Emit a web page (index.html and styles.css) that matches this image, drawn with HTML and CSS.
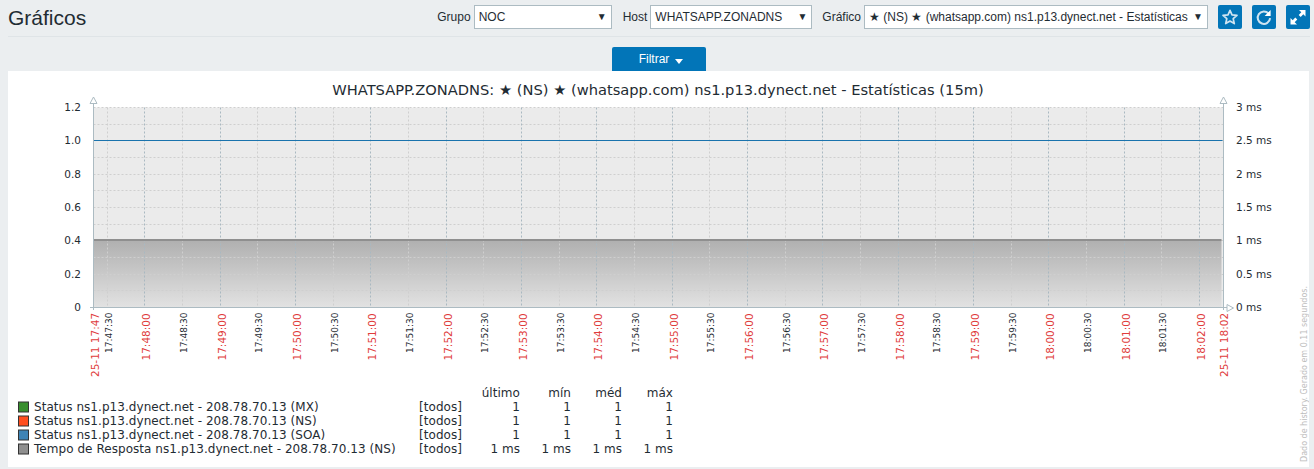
FILE: index.html
```html
<!DOCTYPE html>
<html>
<head>
  <title>Gráficos</title>
  <link rel="stylesheet" href="styles.css">
</head>
<body>
  <header class="page-head">
    <h1>Gráficos</h1>
    <div class="controls">
      <label class="field">Grupo
        <span class="select select-group"><select><option>NOC</option></select></span>
      </label>
      <label class="field">Host
        <span class="select select-host"><select><option>WHATSAPP.ZONADNS</option></select></span>
      </label>
      <label class="field">Gráfico
        <span class="select select-graph"><select><option>★ (NS) ★ (whatsapp.com) ns1.p13.dynect.net - Estatísticas</option></select></span>
      </label>
      <div class="icon-buttons">
        <button class="icon-btn" title="Favorito">
          <svg viewBox="0 0 24 24" width="24" height="24"><path d="M12 5.300l2 4.600 5 .5-3.800 3.300 1.100 4.900-4.300-2.600-4.300 2.600 1.100-4.900-3.800-3.300 5-.5z" fill="none" stroke="#cfe4f1" stroke-width="1.700" stroke-linejoin="round"/></svg>
        </button>
        <button class="icon-btn" title="Atualizar">
          <svg viewBox="0 0 24 24" width="24" height="24"><path d="M16.600 8.600a6.200 6.200 0 1 0 1.500 4.600" fill="none" stroke="#cfe4f1" stroke-width="2"/><path d="M18.600 5v6h-6z" fill="#fff"/></svg>
        </button>
        <button class="icon-btn" title="Tela cheia">
          <svg viewBox="0 0 24 24" width="24" height="24"><path d="M13 5h6.500v6.500l-2.200-2.200-2.600 2.600-2-2 2.600-2.600zM11 19.500H4.500V13l2.200 2.200 2.600-2.600 2 2-2.600 2.600z" fill="#fff"/></svg>
        </button>
      </div>
    </div>
  </header>

  <div class="filter-row">
    <button class="filter-tab">Filtrar<span class="caret"></span></button>
  </div>

  <main class="graph-card">
    <svg id="graph" viewBox="8 71 1301 396" width="1301" height="396"></svg>
  </main>

  <script>
    const NS = "http://www.w3.org/2000/svg";
    const graph = document.getElementById("graph");

    function add(tag, attrs, text) {
      const el = document.createElementNS(NS, tag);
      for (const key in attrs) el.setAttribute(key, attrs[key]);
      if (text) el.textContent = text;
      graph.appendChild(el);
      return el;
    }

    function vtext(x, y, cls, text) {
      add("text", { class: cls, transform: `translate(${x} ${y}) rotate(-90)` }, text);
    }

    const plotLeft = 93.5, plotRight = 1223.5, plotTop = 107.5, plotBottom = 307.5;
    const defs = add("defs", {});
    defs.innerHTML = `<linearGradient id="fade" x1="0" y1="0" x2="0" y2="1">
      <stop offset="0" stop-color="#b0b0b0"/><stop offset="1" stop-color="#e2e2e2"/></linearGradient>`;

    add("rect", { x: plotLeft, y: plotTop, width: plotRight - plotLeft, height: plotBottom - plotTop, fill: "#ebebeb" });
    add("rect", { x: plotLeft, y: 240, width: plotRight - plotLeft - 2, height: plotBottom - 240, fill: "url(#fade)" });

    // horizontal grid, every 0.1
    for (let i = 0; i < 12; i++) {
      const y = Math.round(plotTop + i * 200 / 12 - 0.5) + 0.5;
      add("line", { class: "grid", x1: plotLeft, x2: plotRight, y1: y, y2: y });
    }

    // vertical grid and time labels
    for (let i = 0; i < 30; i++) {
      const x = Math.round(106.7 + i * 37.665) + 0.5;
      const minute = i % 2 == 1;
      add("line", { class: minute ? "grid-major" : "grid", x1: x, x2: x, y1: plotTop, y2: plotBottom });
      const total = 17 * 3600 + 47 * 60 + 30 + i * 30;
      const h = Math.floor(total / 3600), m = Math.floor(total / 60) % 60, s = total % 60;
      const label = `${h}:${String(m).padStart(2, "0")}:${String(s).padStart(2, "0")}`;
      if (minute) vtext(x + 5, 360.5, "tick-red", label);
      else vtext(x + 4.5, 353, "tick", label);
    }
    vtext(99, 377, "tick-red", "25-11 17:47");
    vtext(1228, 377, "tick-red", "25-11 18:02");

    // series
    add("line", { x1: plotLeft, x2: plotRight - 1, y1: 140.5, y2: 140.5, stroke: "#1a73ad", "stroke-width": 1 });
    add("line", { x1: plotLeft, x2: plotRight - 2, y1: 240, y2: 240, stroke: "#8f8f8f", "stroke-width": 2 });

    // axes with arrows
    add("path", { class: "axis", d: `M${plotLeft} 101V310M${plotRight} 101V310M90 ${plotBottom}H1230` });
    add("path", { class: "arrow", d: "M93.5 97l-3.500 6.500h7z" });
    add("path", { class: "arrow", d: "M1223.500 97l-3.500 6.500h7z" });
    add("path", { class: "arrow", d: "M1233.500 308l-6.500-3.500v7z" });

    const leftVals = ["1.2", "1.0", "0.8", "0.6", "0.4", "0.2", "0"];
    const rightVals = ["3 ms", "2.5 ms", "2 ms", "1.5 ms", "1 ms", "0.5 ms", "0 ms"];
    leftVals.forEach((v, i) => {
      const y = plotTop + i * 200 / 6 + 3.5;
      add("text", { class: "val", x: 81, y: y, "text-anchor": "end" }, v);
      add("text", { class: "val", x: 1236, y: y }, rightVals[i]);
    });

    add("text", { class: "title", x: 658, y: 95, "text-anchor": "middle" },
      "WHATSAPP.ZONADNS: ★ (NS) ★ (whatsapp.com) ns1.p13.dynect.net - Estatísticas (15m)");

    // legend
    const cols = [520, 571, 622, 673];
    ["último", "mín", "méd", "máx"].forEach((h, i) => {
      add("text", { class: "leg", x: cols[i], y: 397, "text-anchor": "end" }, h);
    });
    const rows = [
      ["#388e2e", "Status ns1.p13.dynect.net - 208.78.70.13 (MX)", "1"],
      ["#ff4e1f", "Status ns1.p13.dynect.net - 208.78.70.13 (NS)", "1"],
      ["#3f84b5", "Status ns1.p13.dynect.net - 208.78.70.13 (SOA)", "1"],
      ["#8f8f8f", "Tempo de Resposta ns1.p13.dynect.net - 208.78.70.13 (NS)", "1 ms"]
    ];
    rows.forEach((row, r) => {
      const y = 411 + r * 14;
      add("rect", { x: 18.5, y: y - 9, width: 10, height: 10, fill: row[0], stroke: "#333" });
      add("text", { class: "leg", x: 34, y: y }, row[1]);
      add("text", { class: "leg", x: 419, y: y }, "[todos]");
      cols.forEach(c => add("text", { class: "leg", x: c, y: y, "text-anchor": "end" }, row[2]));
    });

    vtext(1307, 462, "note", "Dado de history. Gerado em 0.11 segundos.");
  </script>
</body>
</html>
```

FILE: styles.css
```css
body {
  margin: 0;
  background-color: #ebeef0;
  font-family: "Liberation Sans", Arial, sans-serif;
  font-size: 12px;
  color: #1f2c33;
  overflow: hidden;
}

button {
  font-family: inherit;
  border: none;
  cursor: pointer;
}

.page-head {
  display: flex;
  justify-content: space-between;
  align-items: flex-start;
  height: 31px;
  margin: 0 4px 0 8px;
  padding-top: 5px;
  border-bottom: 1px solid #dfe4e7;
}

h1 {
  margin: 0;
  font-size: 21px;
  font-weight: normal;
  line-height: 26px;
}

.controls {
  display: flex;
  align-items: center;
}

.field {
  display: flex;
  align-items: center;
  gap: 3px;
  margin-right: 10px;
}

.field:first-child {
  margin-right: 11px;
}

.select {
  position: relative;
  display: block;
}

.select::after {
  content: "▼";
  position: absolute;
  right: 5px;
  top: 6px;
  font-size: 10px;
  line-height: 12px;
  pointer-events: none;
}

.select select {
  display: block;
  width: 100%;
  height: 24px;
  padding: 0 4px;
  border: 1px solid #acbbc2;
  background: #fff;
  color: #1f2c33;
  font: 12px "Liberation Sans", Arial, sans-serif;
  appearance: none;
  border-radius: 0;
}

.select-group { width: 138px; }
.select-host { width: 162px; }
.select-graph { width: 344px; }

.icon-buttons {
  display: flex;
  gap: 10px;
}

.icon-btn {
  width: 24px;
  height: 24px;
  padding: 0;
  background-color: #0275b8;
  border-radius: 2px;
}

.icon-btn svg {
  display: block;
}

.filter-row {
  display: flex;
  justify-content: center;
  margin-top: 10px;
  padding-left: 4px;
}

.filter-tab {
  width: 94px;
  height: 24px;
  padding: 0 0 0 4px;
  background-color: #0275b8;
  color: #fff;
  font-size: 12px;
  border-radius: 2px 2px 0 0;
}

.caret {
  display: inline-block;
  margin-left: 6px;
  border-top: 5px solid #fff;
  border-left: 4px solid transparent;
  border-right: 4px solid transparent;
  vertical-align: -1px;
}

.graph-card {
  margin: 0 5px 0 8px;
  background-color: #fff;
  height: 396px;
}

#graph {
  display: block;
}

#graph text {
  font-family: "DejaVu Sans", sans-serif;
  fill: #1f2c33;
}

#graph .title { font-size: 14.67px; }
#graph .val { font-size: 10.5px; }
#graph .leg { font-size: 12px; letter-spacing: 0.05px; }
#graph .tick { font-size: 9px; }
#graph .tick-red { font-size: 10.5px; fill: #e03c3c; }
#graph .note { font-size: 8px; fill: #bdbdbd; }

.grid {
  stroke: #cfcfcf;
  stroke-dasharray: 2 2;
}

.grid-major {
  stroke: #a9b8c1;
  stroke-dasharray: 2 2;
}

.axis {
  fill: none;
  stroke: #acbbc2;
}

.arrow {
  fill: #fff;
  stroke: #acbbc2;
}
```
